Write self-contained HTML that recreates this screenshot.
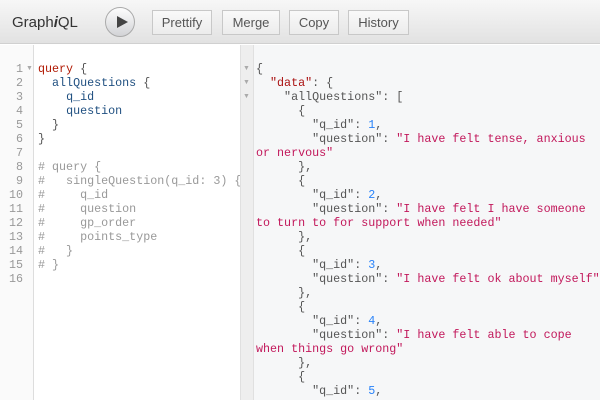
<!DOCTYPE html><html><head><style>
*{margin:0;padding:0;box-sizing:border-box}
body{width:600px;height:400px;overflow:hidden;font-family:"Liberation Sans",sans-serif;background:#fff;position:relative}
.top{position:absolute;left:0;top:0;width:600px;height:44px;background:linear-gradient(#f7f7f7,#e2e2e2);border-bottom:1px solid #d0d0d0}
.title{position:absolute;left:12px;top:14px;font-size:15px;color:#333}
.play{position:absolute;left:105px;top:7px;width:30px;height:30px;border-radius:50%;background:linear-gradient(#fdfdfd,#d2d3d6);border:1px solid #aaa}
.play:after{content:"";position:absolute;left:11px;top:8px;border-left:11px solid #444;border-top:6.5px solid transparent;border-bottom:6.5px solid transparent}
.btn{position:absolute;top:10px;height:25px;border:1px solid #c8c8c8;background:linear-gradient(#f9f9f9,#ececec);font-size:13px;color:#555;text-align:center;line-height:23px}
.code{font-family:"Liberation Mono",monospace;font-size:11.7px;line-height:14px;white-space:pre;position:absolute}
.gut{position:absolute;left:0;top:45px;width:34px;height:355px;background:#fafafa;border-right:1px solid #ddd}
.div{position:absolute;left:240px;top:45px;width:13px;height:355px;background:#eeeeee;border-left:1px solid #e0e0e0}
.res{position:absolute;left:253px;top:45px;width:347px;height:355px;background:#f6f7f8;border-left:1px solid #e0e0e0}
.k{color:#b11a04}.f{color:#1f4f80}.c{color:#999}.p{color:#a11}.n{color:#2882f9}.str{color:#c2185b}
.ar{font-size:7px;color:#aaa;position:absolute}
</style></head><body>
<div class="top">
<div class="title">Graph<i style="font-weight:bold">i</i>QL</div>
<div class="play"></div>
<div class="btn" style="left:152px;width:60px">Prettify</div>
<div class="btn" style="left:222px;width:58px">Merge</div>
<div class="btn" style="left:289px;width:50px">Copy</div>
<div class="btn" style="left:348px;width:61px">History</div>
</div>
<div class="gut"></div>
<div class="code" style="left:0;top:62px;width:23px;text-align:right;color:#999">1
2
3
4
5
6
7
8
9
10
11
12
13
14
15
16</div>
<div class="ar" style="left:26px;top:65px">▼</div>
<div class="code" style="left:38px;top:62px;color:#555"><span class="k">query</span> {
  <span class="f">allQuestions</span> {
    <span class="f">q_id</span>
    <span class="f">question</span>
  }
}

<span class="c"># query {
#   singleQuestion(q_id: 3) {
#     q_id
#     question
#     gp_order
#     points_type
#   }
# }</span></div>
<div class="div"></div>
<div class="res"></div>
<div class="ar" style="left:243px;top:65px">▼</div>
<div class="ar" style="left:243px;top:79px">▼</div>
<div class="ar" style="left:243px;top:93px">▼</div>
<div class="code" style="left:256px;top:62px;color:#555">{
  <span class="p">"data"</span>: {
    "allQuestions": [
      {
        "q_id": <span class="n">1</span>,
        "question": <span class="str">"I have felt tense, anxious
or nervous"</span>
      },
      {
        "q_id": <span class="n">2</span>,
        "question": <span class="str">"I have felt I have someone
to turn to for support when needed"</span>
      },
      {
        "q_id": <span class="n">3</span>,
        "question": <span class="str">"I have felt ok about myself"</span>
      },
      {
        "q_id": <span class="n">4</span>,
        "question": <span class="str">"I have felt able to cope
when things go wrong"</span>
      },
      {
        "q_id": <span class="n">5</span>,</div>
</body></html>
